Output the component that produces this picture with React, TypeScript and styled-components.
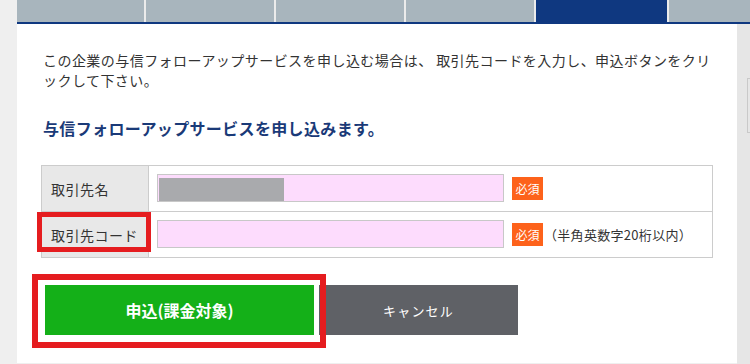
import React from "react";
import styled, { createGlobalStyle } from "styled-components";

const Global = createGlobalStyle`
  html, body { margin: 0; padding: 0; }
  body {
    background: #efefef;
    font-family: "Noto Sans CJK JP", "Noto Sans", sans-serif;
    color: #333;
  }
  * { box-sizing: border-box; }
`;

const Page = styled.div`
  width: 750px;
  height: 364px;
  overflow: hidden;
  padding-left: 17px;
  display: flex;
  flex-direction: column;
  background: #efefef;
`;

const TabBar = styled.div`
  display: flex;
  gap: 2px;
  height: 24px;
  border-bottom: 2px solid #0f3880;
  background: #ebebeb;
`;

const Tab = styled.div<{ $active?: boolean; $w: number }>`
  width: ${(p) => p.$w}px;
  flex: ${(p) => (p.$w === 0 ? "1" : "none")};
  height: 22px;
  background: ${(p) => (p.$active ? "#0f3880" : "#a8b5bd")};
`;

const Body = styled.div`
  display: flex;
  flex: 1;
  align-items: flex-start;
`;

const Panel = styled.div`
  width: 720px;
  background: #fff;
  padding: 26px 24px 28px 24px;
  display: flex;
  flex-direction: column;
`;

const Sidebar = styled.div`
  flex: 1;
  align-self: stretch;
  background: #e6e6e6;
  overflow: hidden;
  padding-top: 54px;
`;

const SideBox = styled.div`
  margin-left: 10px;
  width: 20px;
  height: 55px;
  border: 1px solid #c9c9c9;
`;

const Lead = styled.p`
  margin: 0 0 0 2px;
  font-size: 14px;
  line-height: 20px;
  letter-spacing: 0.45px;
  line-break: anywhere;
  color: #333;
`;

const Heading = styled.h2`
  margin: 28px 0 0 2px;
  font-size: 16px;
  line-height: 20px;
  font-weight: bold;
  letter-spacing: 0.35px;
  color: #1a3a78;
`;

const Table = styled.div`
  margin-top: 27px;
  display: grid;
  grid-template-columns: 107px 1fr;
  border-top: 1px solid #cccccc;
  border-left: 1px solid #cccccc;
`;

const LabelCell = styled.div`
  position: relative;
  height: 46px;
  background: #e8e8e8;
  border-right: 1px solid #cccccc;
  border-bottom: 1px solid #cccccc;
  display: flex;
  align-items: center;
  padding-left: 9px;
  font-size: 14px;
  letter-spacing: 0.5px;
  color: #333;
`;

const FieldCell = styled.div`
  height: 46px;
  border-right: 1px solid #cccccc;
  border-bottom: 1px solid #cccccc;
  display: flex;
  align-items: center;
  padding: 0 8px 1px 8px;
`;

const Field = styled.div`
  width: 347px;
  height: 28px;
  background: #fddcfd;
  border: 1px solid #c8c8c8;
  display: flex;
  align-items: flex-end;
  padding-left: 1px;
`;

const Redacted = styled.div`
  width: 125px;
  height: 23px;
  background: #a9aaad;
`;

const Required = styled.span`
  margin-left: 8px;
  width: 31px;
  height: 23px;
  background: #fd621b;
  color: #fff;
  font-size: 12px;
  display: inline-flex;
  align-items: center;
  justify-content: center;
`;

const Note = styled.span`
  margin-left: 1px;
  font-size: 13px;
  letter-spacing: 0.3px;
  color: #333;
`;

const Highlight = styled.div<{ $l: number; $t: number; $w: number; $h: number; $b: number }>`
  position: absolute;
  left: ${(p) => p.$l}px;
  top: ${(p) => p.$t}px;
  width: ${(p) => p.$w}px;
  height: ${(p) => p.$h}px;
  border: ${(p) => p.$b}px solid #e51c1f;
  pointer-events: none;
`;

const Actions = styled.div`
  margin-top: 27px;
  margin-left: 4px;
  display: flex;
  gap: 5px;
`;

const ButtonWrap = styled.div`
  position: relative;
`;

const Button = styled.button<{ $kind: "primary" | "cancel" }>`
  height: 50px;
  width: ${(p) => (p.$kind === "primary" ? 269 : 199)}px;
  border: none;
  margin: 0;
  padding: 0;
  background: ${(p) => (p.$kind === "primary" ? "#14b018" : "#5f6166")};
  color: #fff;
  font-family: "Noto Sans CJK JP", "Noto Sans", sans-serif;
  font-size: ${(p) => (p.$kind === "primary" ? 16 : 13)}px;
  font-weight: ${(p) => (p.$kind === "primary" ? "bold" : "normal")};
  letter-spacing: ${(p) => (p.$kind === "primary" ? 0 : 1.2)}px;
  cursor: pointer;
`;

const tabWidths = [127, 128, 128, 128, 131, 0];

export default function App() {
  return (
    <>
      <Global />
      <Page>
        <TabBar>
          {tabWidths.map((w, i) => (
            <Tab key={i} $w={w} $active={i === 4} />
          ))}
        </TabBar>
        <Body>
          <Panel>
            <Lead>
              この企業の与信フォローアップサービスを申し込む場合は、 取引先コードを入力し、申込ボタンをクリックして下さい。
            </Lead>
            <Heading>与信フォローアップサービスを申し込みます。</Heading>
            <Table>
              <LabelCell>取引先名</LabelCell>
              <FieldCell>
                <Field>
                  <Redacted />
                </Field>
                <Required>必須</Required>
              </FieldCell>
              <LabelCell>
                取引先コード
                <Highlight $l={-5} $t={0} $w={114} $h={40} $b={5} />
              </LabelCell>
              <FieldCell>
                <Field />
                <Required>必須</Required>
                <Note>（半角英数字20桁以内）</Note>
              </FieldCell>
            </Table>
            <Actions>
              <ButtonWrap>
                <Button $kind="primary">申込(課金対象)</Button>
                <Highlight $l={-13} $t={-11} $w={294} $h={74} $b={6} />
              </ButtonWrap>
              <Button $kind="cancel">キャンセル</Button>
            </Actions>
          </Panel>
          <Sidebar>
            <SideBox />
          </Sidebar>
        </Body>
      </Page>
    </>
  );
}
